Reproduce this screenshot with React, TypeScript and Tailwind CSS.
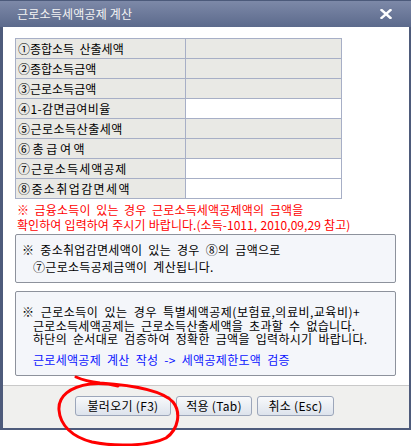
import React from 'react';

const font = { fontFamily: "'Noto Sans CJK KR', 'Noto Sans', sans-serif" };

// tracking per row to follow the wider bitmap-font spacing of the original
const rows = [
  { label: '①종합소득  산출세액', gray: true, track: 'tracking-[0px]' },
  { label: '②종합소득금액', gray: true, track: 'tracking-[0px]' },
  { label: '③근로소득금액', gray: true, track: 'tracking-[0px]' },
  { label: '④1-감면급여비율', gray: false, track: 'tracking-[0.4px]' },
  { label: '⑤근로소득산출세액', gray: true, track: 'tracking-[0.5px]' },
  { label: '⑥총급여액', gray: true, track: 'tracking-[2.6px]' },
  { label: '⑦근로소득세액공제', gray: false, track: 'tracking-[1px]' },
  { label: '⑧중소취업감면세액', gray: false, track: 'tracking-[1.4px]' },
];

const Btn: React.FC<{ w: string; children: React.ReactNode }> = ({ w, children }) => (
  <button
    className={`${w} h-[20px] rounded-[3px] border border-[#9ca6ba] bg-gradient-to-b from-[#f8f9fb] to-[#dde3ec] text-[12px] leading-[18px] text-black tracking-[0.3px]`}
  >
    {children}
  </button>
);

const App: React.FC = () => {
  return (
    <div className="relative w-[411px] h-[446px] bg-white text-[12px] text-black" style={font}>
      {/* Dialog window */}
      <div className="flex flex-col h-[430px]">
        {/* Title bar */}
        <div className="h-[27px] flex items-center justify-between border-t border-[#4c5a7a] bg-gradient-to-b from-[#7d89a8] to-[#5c6a8c] pl-[17px] pr-[19px]">
          <span className="text-[12px] leading-none text-[#f4f4f4] tracking-[0.2px]">근로소득세액공제 계산</span>
          <svg width="12" height="10" viewBox="0 0 12 10">
            <path d="M1.5 1 L10.5 9 M10.5 1 L1.5 9" stroke="#fff" strokeWidth="2.4" strokeLinecap="square" />
          </svg>
        </div>

        <div className="flex-1 flex flex-col border-l-[3px] border-r-[2px] border-b-[2px] border-[#4e5b7b]">
          {/* Body */}
          <div className="h-[358px] bg-white pl-[12px] pt-[11px]">
            <table className="border-collapse w-[327px]">
              <tbody>
                {rows.map((r) => (
                  <tr key={r.label} className="h-[20px]">
                    <td className={`w-[170px] border border-[#a7afc6] bg-[#e9e9e5] pl-[2px] p-0 leading-[18px] whitespace-pre ${r.track}`}>
                      {r.label}
                    </td>
                    <td className={`border border-[#a7afc6] p-0 ${r.gray ? 'bg-[#e9e9e5]' : 'bg-white'}`}></td>
                  </tr>
                ))}
              </tbody>
            </table>

            <div className="mt-[3px] pl-[2px] leading-[15px] text-[#ff0000] whitespace-pre">
              <div className="tracking-[0.2px] [word-spacing:2.5px]">※ 금융소득이 있는 경우 근로소득세액공제액의 금액을</div>
              <div className="tracking-[0.05px] [word-spacing:0.5px]">확인하여 입력하여 주시기 바랍니다.(소득-1011, 2010,09,29 참고)</div>
            </div>

            <div className="mt-[2px] w-[381px] h-[49px] rounded-[2px] border border-[#8d929c] bg-[#f4f6fa] pt-[6px] pl-[6px] leading-[17px] whitespace-pre tracking-[0.3px] [word-spacing:3px]">
              <div>※ 중소취업감면세액이 있는 경우 ⑧의 금액으로</div>
              <div className="pl-[11px]">⑦근로소득공제금액이 계산됩니다.</div>
            </div>

            <div className="mt-[8px] w-[381px] h-[85px] rounded-[2px] border border-[#8d929c] bg-[#f4f6fa] pt-[13px] pl-[6px] whitespace-pre tracking-[0.3px] [word-spacing:3px]">
              <div className="leading-[13.5px]">
                <div className="tracking-[0.5px]">※ 근로소득이 있는 경우 특별세액공제(보험료,의료비,교육비)+</div>
                <div className="pl-[11px]">근로소득세액공제는 근로소득산출세액을 초과할 수 없습니다.</div>
                <div className="pl-[11px]">하단의 순서대로 검증하여 정확한 금액을 입력하시기 바랍니다.</div>
              </div>
              <div className="mt-[7px] pl-[11px] leading-[14px] text-[#0a14ff]">
                근로세액공제 계산 작성 -&gt; 세액공제한도액 검증
              </div>
            </div>
          </div>

          {/* Footer */}
          <div className="flex-1 border-t border-[#c9c9c9] bg-[#f0f0ee] pt-[10px] pl-[72px] flex gap-[5px] items-start">
            <Btn w="w-[96px]">불러오기 (F3)</Btn>
            <Btn w="w-[76px]">적용 (Tab)</Btn>
            <Btn w="w-[77px]">취소 (Esc)</Btn>
          </div>
        </div>
      </div>

      {/* Hand-drawn red circle annotation */}
      <svg className="absolute inset-0 pointer-events-none" width="411" height="446" viewBox="0 0 411 446">
        <path
          d="M76 377 C85 381 92 382 100 383 C130 385 162 390 173 402 C181 412 179 429 166 438 C150 446 115 447 92 442 C72 437 60 425 59 410 C58 396 70 387 90 384 C100 383 110 384 118 386"
          fill="none"
          stroke="#ff0000"
          strokeWidth="3"
          strokeLinecap="round"
        />
      </svg>
    </div>
  );
};

export default App;
